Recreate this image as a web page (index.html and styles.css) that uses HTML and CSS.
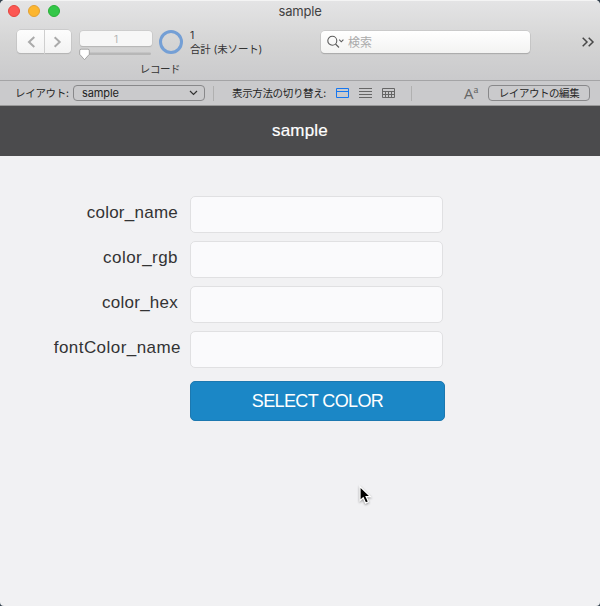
FILE: index.html
```html
<!DOCTYPE html>
<html lang="ja">
<head>
<meta charset="utf-8">
<title>sample</title>
<link rel="stylesheet" href="styles.css">
</head>
<body>
<div class="window">
  <header class="toolbar">
    <div class="titlebar">
      <div class="lights"><i class="light close"></i><i class="light minimize"></i><i class="light expand"></i></div>
      <div class="window-title">sample</div>
    </div>
    <div class="tools">
      <div class="nav">
        <svg width="27" height="24" viewBox="0 0 27 24"><path d="M17.300 7 12 12l5.300 5"/></svg>
        <svg width="27" height="24" viewBox="0 0 27 24"><path d="M10 7 15.300 12 10 17"/></svg>
      </div>
      <div class="record">
        <div class="record-number">1</div>
        <svg class="slider" width="74" height="16" viewBox="0 0 74 16"><rect x="1" y="6.500" width="71" height="2.600" rx="1.300" fill="#b7b7b7"/><path d="M2.200 3.200h6.600q1.500 0 1.500 1.500v3.600L5.500 13.700.7 8.300V4.700q0-1.500 1.500-1.500z" fill="#fff" stroke="#969696" stroke-width=".8"/></svg>
      </div>
      <div class="ring"></div>
      <div class="found"><div>1</div><div class="found-total">合計 (未ソート)</div></div>
      <div class="search">
        <svg width="18" height="14" viewBox="0 0 18 14"><g fill="none" stroke="#5c5c5c" stroke-width="1.100"><circle cx="5.300" cy="5.800" r="4.500"/><path d="m8.500 9 3.500 3.500M12.200 4.700l2.100 2.100 2.100-2.100"/></g></svg>
        <span>検索</span>
      </div>
      <svg class="overflow" width="14" height="12" viewBox="0 0 14 12"><path d="m1.700 1.700 4.300 4.300-4.300 4.300M7.700 1.700 12 6l-4.300 4.300"/></svg>
    </div>
    <div class="record-caption">レコード</div>
  </header>

  <nav class="layout-bar">
    <span class="layout-label">レイアウト:</span>
    <div class="layout-select"><span>sample</span><svg width="9" height="6" viewBox="0 0 9 6"><path d="m1 1 3.500 3.500L8 1" fill="none" stroke="#333" stroke-width="1.200"/></svg></div>
    <i class="divider"></i>
    <span class="view-label">表示方法の切り替え:</span>
    <div class="views">
      <svg class="active" width="13" height="10" viewBox="0 0 13 10"><path d="M.5.5h12v9H.5zM.5 3.500h12"/></svg>
      <svg width="13" height="10" viewBox="0 0 13 10"><path d="M0 .5h13M0 3.500h13M0 6.500h13M0 9.500h13"/></svg>
      <svg width="13" height="10" viewBox="0 0 13 10"><path d="M.5.5h12v9H.5zM0 3.500h13M0 6.500h13M3.500 3.500v6M6.500 3.500v6M9.500 3.500v6"/></svg>
    </div>
    <i class="divider divider-end"></i>
    <div class="formatting">A<span>a</span></div>
    <div class="edit-button"><span>レイアウトの編集</span></div>
  </nav>

  <div class="page-header">sample</div>

  <main class="form">
    <div class="row"><label>color_name</label><div class="input"></div></div>
    <div class="row spaced"><label>color_rgb</label><div class="input"></div></div>
    <div class="row"><label>color_hex</label><div class="input"></div></div>
    <div class="row wide spaced"><label>fontColor_name</label><div class="input"></div></div>
    <div class="select-color"><span>SELECT COLOR</span></div>
  </main>
</div>
<svg class="cursor" width="16" height="21" viewBox="0 0 16 21"><path d="M2 1.500v14.200l3.200-3 2.400 5.400 2.900-1.300-2.400-5.200h4.300z" fill="#000" stroke="#fff" stroke-width="1.200"/></svg>
</body>
</html>
```
FILE: styles.css
```css
* { box-sizing: border-box; }
body {
  margin: 0;
  background: #34424e;
  color: #333;
  font-family: "Liberation Sans", "Noto Sans CJK JP", sans-serif;
}
svg { display: block; flex: none; }
.window {
  width: 600px;
  height: 606px;
  overflow: hidden;
  border-radius: 5px 5px 4px 4px;
  background: #f1f1f3;
}
.toolbar {
  height: 81px;
  border-top: 1px solid #f4f4f4;
  border-bottom: 1px solid #a4a4a6;
  background: linear-gradient(#e4e4e5, #d4d4d4 55%, #cacacc);
}
.titlebar {
  height: 28px;
  display: grid;
  grid-template-columns: 80px 1fr 80px;
}
.lights { display: flex; gap: 8px; padding: 4px 0 0 8px; }
.light { width: 12px; height: 12px; border-radius: 50%; border: 1px solid; }
.close { background: #fc5753; border-color: #e3453e; }
.minimize { background: #fdb62f; border-color: #e2a033; }
.expand { background: #33c748; border-color: #29ae38; }
.window-title {
  text-align: center;
  font: 13px/21px Inter, sans-serif;
  letter-spacing: -.2px;
  color: #424242;
}
.tools { height: 33px; display: flex; align-items: flex-start; padding-left: 17px; }
.nav {
  display: flex;
  width: 54px;
  height: 23px;
  margin-top: 1px;
  border-radius: 4px;
  background: linear-gradient(#fdfdfd, #f2f2f2);
  box-shadow: 0 0 0 .5px #bdbdbd, 0 1px 1px #aaa;
}
.nav svg + svg { border-left: 1px solid #cfcfcf; }
.nav path { fill: none; stroke: #aaa; stroke-width: 2; }
.record { width: 74px; margin-left: 8px; }
.record-number {
  width: 72px;
  height: 15px;
  margin: 2px 0 0 1px;
  border-radius: 3px;
  background: #f7f7f7;
  box-shadow: 0 0 0 .5px #c2c2c2, 0 1px 1px #aaa;
  color: #b3b3b3;
  font: 10px/16px Inter, sans-serif;
  text-align: center;
}
.ring { width: 24px; height: 24px; margin: 1px 0 0 6px; border: 3px solid #749fd5; border-radius: 50%; }
.found { margin-left: 7px; width: 90px; font: 10.5px/14px Inter, "Noto Sans CJK JP", sans-serif; white-space: nowrap; color: #333; }
.found-total { letter-spacing: -.15px; }
.search {
  display: flex;
  align-items: center;
  width: 209px;
  height: 22px;
  margin: 2px 0 0 41px;
  padding-left: 6px;
  border-radius: 4px;
  background: linear-gradient(#fff, #f3f3f2);
  box-shadow: 0 0 0 .5px #bbb, 0 1px 1px #999;
  font: 12px/20px "Noto Sans CJK JP", sans-serif;
  color: #aaa;
}
.search span { margin-left: 3px; }
.overflow { margin: 7px 0 0 51px; }
.overflow path { fill: none; stroke: #484848; stroke-width: 1.5; }
.record-caption { width: 320px; text-align: center; font: 10.5px/13px "Noto Sans CJK JP", sans-serif; letter-spacing: -.4px; }
.layout-bar {
  display: flex;
  align-items: center;
  height: 25px;
  padding-left: 15px;
  border-bottom: 1px solid #999;
  background: #cacacc;
  font: 10.5px/16px "Noto Sans CJK JP", sans-serif;
  white-space: nowrap;
  color: #262626;
}
.layout-label { width: 58px; letter-spacing: -.3px; }
.layout-select {
  display: flex;
  align-items: center;
  justify-content: space-between;
  width: 132px;
  height: 16px;
  padding: 0 6px 0 8px;
  border: 1px solid #88888a;
  border-radius: 4px;
  font: 11px/14px Inter, sans-serif;
  letter-spacing: -.1px;
  color: #222;
}
.divider { width: 1px; height: 15px; margin-left: 8px; background: #b0b0b0; }
.view-label { width: 103px; margin-left: 18px; letter-spacing: -.35px; }
.views { display: flex; gap: 10px; margin-left: 1px; }
.views path { fill: none; stroke: #666; stroke-width: 1; }
.views .active path { stroke: #1677f0; }
.divider-end { margin-left: 16px; }
.formatting {
  display: flex;
  width: 24px;
  margin-left: 52px;
  font: 15px/16px "Open Sans", sans-serif;
  color: #666;
}
.formatting span { font: 11px/8px "Liberation Serif", serif; }
.edit-button {
  width: 102px;
  height: 16px;
  border: 1px solid #88888a;
  border-radius: 4px;
  line-height: 14px;
  text-align: center;
  letter-spacing: -.45px;
}
.page-header {
  height: 50px;
  background: #4b4b4d;
  color: #fff;
  text-align: center;
  font-size: 17px;
  line-height: 50px;
  letter-spacing: .2px;
  -webkit-text-stroke: .2px #fff;
}
.form { padding-top: 40px; }
.row { display: flex; gap: 12px; height: 45px; }
.row label { width: 178px; text-align: right; font-size: 17px; line-height: 33px; letter-spacing: .25px; }
.row.spaced label { letter-spacing: .45px; }
.wide { gap: 9px; }
.wide label { width: 181px; }
.input { width: 253px; height: 37px; border: 1px solid #e0e0e2; border-radius: 5px; background: #fafafc; }
.select-color {
  width: 255px;
  height: 40px;
  margin: 5px 0 0 190px;
  border: 1px solid #1c78b0;
  border-radius: 5px;
  background: #1b87c6;
  color: #fff;
  text-align: center;
  font-size: 18px;
  line-height: 38px;
  letter-spacing: -.6px;
}
.cursor { position: absolute; left: 358px; top: 485px; filter: drop-shadow(0 1px 1px #0006); }
```
